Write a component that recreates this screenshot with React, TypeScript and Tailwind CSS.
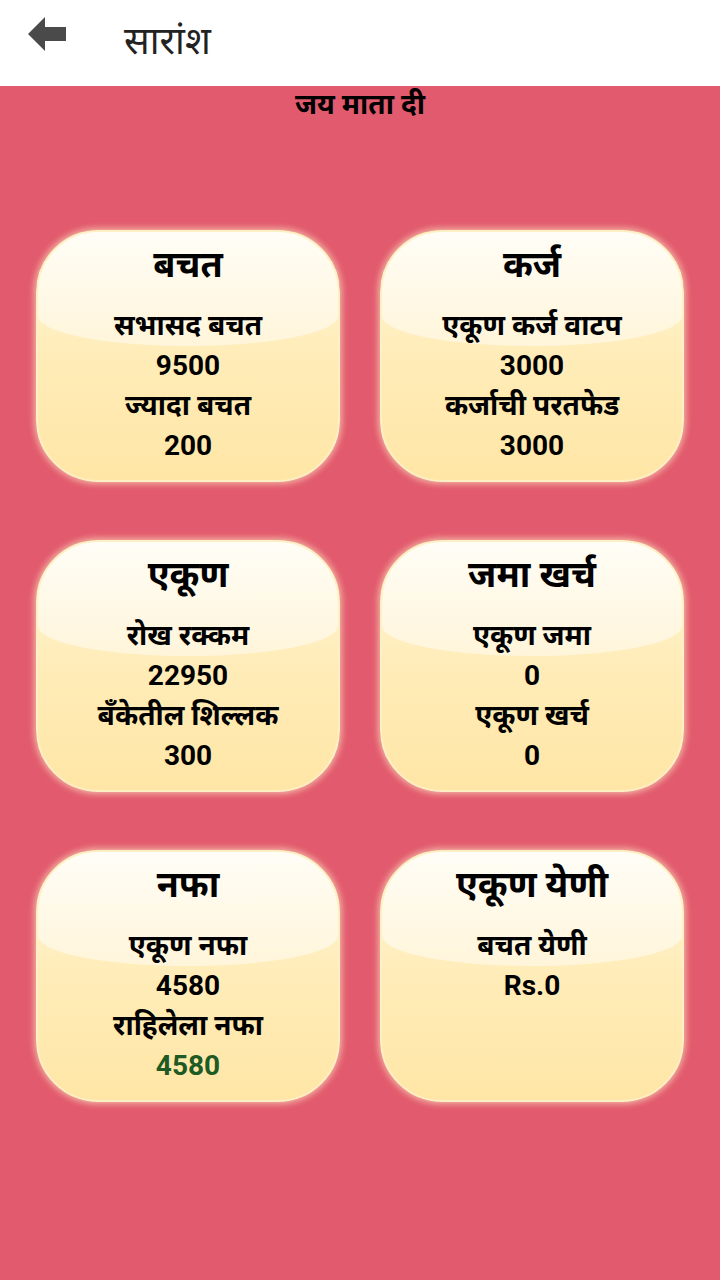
import React from "react";

type Card = { title: string; lines: { text: string; green?: boolean }[] };

const cards: Card[] = [
  { title: "बचत", lines: [{ text: "सभासद बचत" }, { text: "9500" }, { text: "ज्यादा बचत" }, { text: "200" }] },
  { title: "कर्ज", lines: [{ text: "एकूण कर्ज वाटप" }, { text: "3000" }, { text: "कर्जाची परतफेड" }, { text: "3000" }] },
  { title: "एकूण", lines: [{ text: "रोख रक्कम" }, { text: "22950" }, { text: "बँकेतील शिल्लक" }, { text: "300" }] },
  { title: "जमा खर्च", lines: [{ text: "एकूण जमा" }, { text: "0" }, { text: "एकूण खर्च" }, { text: "0" }] },
  { title: "नफा", lines: [{ text: "एकूण नफा" }, { text: "4580" }, { text: "राहिलेला नफा" }, { text: "4580", green: true }] },
  { title: "एकूण येणी", lines: [{ text: "बचत येणी" }, { text: "Rs.0" }] },
];

const font = { fontFamily: 'Roboto, "Noto Sans", "Noto Sans Devanagari", sans-serif' };

function GlossCard({ card }: { card: Card }) {
  return (
    <div className="relative h-[252px] rounded-[62px] border-2 border-[#fdf0c4] bg-gradient-to-b from-[#fff6d8] via-[#ffecb8] to-[#ffe6a6] shadow-[0_0_6px_2px_rgba(255,240,200,0.6)] overflow-hidden">
      <div className="absolute left-0 right-0 top-0 h-[114px] rounded-t-[60px] rounded-b-[50%_30px] bg-gradient-to-b from-[#fffdf6] to-[#fff5da]" />
      <div className="relative flex flex-col items-center pt-[10px] text-black">
        <div className="text-[36px] font-bold leading-[46px]">{card.title}</div>
        <div className="mt-[18px] flex flex-col items-center">
          {card.lines.map((l, i) => (
            <div
              key={i}
              className={`text-[28px] font-bold leading-[40px] ${l.green ? "text-[#1e5a24]" : "text-black"}`}
            >
              {l.text}
            </div>
          ))}
        </div>
      </div>
    </div>
  );
}

export default function App() {
  return (
    <div className="w-[720px] h-[1280px] bg-[#e25a6d] flex flex-col" style={font}>
      <div className="h-[86px] bg-white flex items-center shrink-0">
        <div className="ml-[28px] w-[40px] flex items-center -mt-[18px]">
          <svg width="38" height="34" viewBox="0 0 38 34">
            <path d="M0 17 L17 0 L17 10 L38 10 L38 24 L17 24 L17 34 Z" fill="#4a4a4a" />
          </svg>
        </div>
        <div className="ml-[56px] text-[38px] text-[#222] -mt-[4px]">सारांश</div>
      </div>
      <div className="text-center text-[28px] font-bold text-black leading-[38px] mt-[0px]">जय माता दी</div>
      <div className="grid grid-cols-2 gap-x-[40px] gap-y-[58px] px-[36px] mt-[106px]">
        {cards.map((c, i) => (
          <GlossCard key={i} card={c} />
        ))}
      </div>
    </div>
  );
}
